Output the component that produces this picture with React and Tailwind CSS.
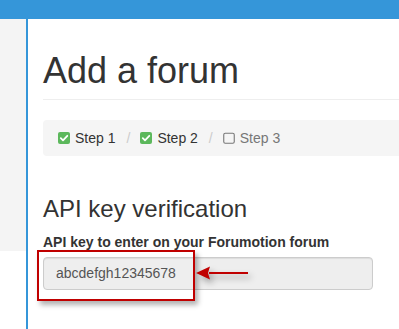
import React from "react";

const CheckedBox = () => (
  <svg width="12" height="12" viewBox="0 0 12 12" className="shrink-0">
    <rect x="0" y="0" width="12" height="12" rx="2" fill="#5cb85c" />
    <path d="M2.8 6.2 L5 8.3 L9.3 3.8" stroke="#fff" strokeWidth="1.8" fill="none" strokeLinecap="round" strokeLinejoin="round" />
  </svg>
);

const EmptyBox = () => (
  <svg width="12" height="12" viewBox="0 0 12 12" className="shrink-0">
    <rect x="0.75" y="1.25" width="10.5" height="10" rx="1.5" fill="none" stroke="#777" strokeWidth="1.1" />
  </svg>
);

const steps = [
  { name: "Step 1", done: true },
  { name: "Step 2", done: true },
  { name: "Step 3", done: false },
];

const App = () => {
  return (
    <div className="w-[399px] h-[329px] overflow-hidden bg-white font-['Liberation_Sans',Arial,sans-serif] text-[#333]">
      <div className="h-[19px] bg-[#3596d9]" />
      <div className="flex h-[310px]">
        <div className="w-[26px] shrink-0">
          <div className="h-[232px] bg-[#f4f4f4]" />
        </div>
        <div className="w-[2px] shrink-0 bg-[#3596d9]" />
        <div className="flex-1 pl-[15px] pt-[32px]">
          <div className="border-b border-[#eee] pb-[8px]">
            <h1 className="text-[36px] leading-[40px] font-normal whitespace-nowrap">Add a forum</h1>
          </div>

          <ul className="mt-[20px] h-[36px] flex items-center px-[15px] bg-[#f5f5f5] rounded-l text-[14px] leading-[20px]">
            {steps.map((el, i) => (
              <li key={i} className="flex items-center">
                {i > 0 && <span className="pl-[11px] pr-[10px] text-[#ccc]">/</span>}
                <span className={`flex items-center gap-[5px] ${el.done ? "text-[#333]" : "text-[#777]"}`}>
                  {el.done ? <CheckedBox /> : <EmptyBox />}
                  {el.name}
                </span>
              </li>
            ))}
          </ul>

          <h3 className="mt-[40px] text-[24px] leading-[26px] font-normal whitespace-nowrap">API key verification</h3>
          <label className="block mt-[10px] text-[14px] leading-[20px] font-bold whitespace-nowrap">
            API key to enter on your Forumotion forum
          </label>

          <div className="relative mt-[5px] w-[330px]">
            <div className="h-[33px] flex items-center px-3 bg-[#eee] border border-[#ccc] rounded text-[14px] text-[#555] shadow-[inset_0_1px_1px_rgba(0,0,0,0.075)]">
              abcdefgh12345678
            </div>
            <div className="absolute left-[-6px] top-[-7px] w-[158px] h-[51px] border-2 border-[#c00000] shadow-[3px_4px_5px_rgba(0,0,0,0.3)]" />
            <svg
              className="absolute left-[152px] top-[8px] drop-shadow-[3px_4px_3px_rgba(0,0,0,0.35)]"
              width="54"
              height="16"
              viewBox="0 0 54 16"
            >
              <path d="M14 7 H53 V9 H14 Z" fill="#c00000" />
              <path d="M1 8 L15 1.5 L13 8 L15 14.5 Z" fill="#c00000" />
            </svg>
          </div>
        </div>
      </div>
    </div>
  );
};

export default App;
